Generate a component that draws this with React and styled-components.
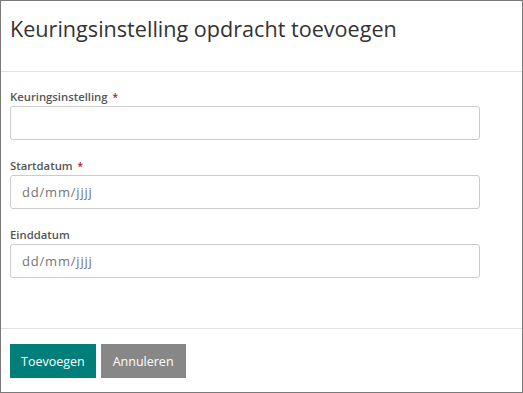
import React from "react"
import styled, { createGlobalStyle } from "styled-components"

const GlobalStyle = createGlobalStyle`
    html, body {
        margin: 0;
        padding: 0;
        background: #ffffff;
    }
    * {
        box-sizing: border-box;
    }
`

const Dialog = styled.div`
    display: flex;
    flex-direction: column;
    width: 523px;
    height: 393px;
    border: 1px solid #7a7a7a;
    background: #ffffff;
    font-family: "Open Sans", "Noto Sans", sans-serif;
    color: #333333;
`

const Header = styled.div`
    height: 71px;
    padding: 14px 9px 0;
    border-bottom: 1px solid #e2e2e2;
`

const Title = styled.h1`
    margin: 0;
    font-size: 21.6px;
    font-weight: 400;
    line-height: 28px;
    color: #333333;
`

const Body = styled.div`
    flex: 1;
    display: flex;
    flex-direction: column;
    padding: 16px 42px 0 9px;
`

const Field = styled.div`
    display: flex;
    flex-direction: column;
    margin-bottom: 17px;
`

const Label = styled.label`
    font-size: 11.3px;
    font-weight: 600;
    line-height: 18px;
    color: #555555;
`

const Required = styled.span`
    color: #b3121f;
    margin-left: 5px;
    font-size: 10px;
`

const Input = styled.input`
    height: 34px;
    padding: 0 11px;
    border: 1px solid #cccccc;
    border-radius: 3px;
    font-family: inherit;
    font-size: 13px;
    letter-spacing: 0.8px;
    color: #333333;
    outline: none;

    ::placeholder {
        color: #9a9a9a;
    }
`

const Footer = styled.div`
    display: flex;
    gap: 5px;
    height: 64px;
    padding: 15px 9px 0;
    border-top: 1px solid #e2e2e2;
`

const Button = styled.button`
    height: 34px;
    padding: 0 ${props => props.$pad}px;
    border: none;
    border-radius: 0;
    font-family: inherit;
    font-size: 12.5px;
    color: #ffffff;
    background-color: ${props => props.$primary ? "#007f7a" : "#878787"};
`

const fields = [
    { label: "Keuringsinstelling", required: true, placeholder: "" },
    { label: "Startdatum", required: true, placeholder: "dd/mm/jjjj" },
    { label: "Einddatum", required: false, placeholder: "dd/mm/jjjj" }
]

export default function App() {
    return (
        <>
            <GlobalStyle />
            <Dialog>
                <Header>
                    <Title>Keuringsinstelling opdracht toevoegen</Title>
                </Header>
                <Body>
                    {fields.map((field, index) => (
                        <Field key={index}>
                            <Label>
                                {field.label}
                                {field.required && <Required>*</Required>}
                            </Label>
                            <Input type="text" placeholder={field.placeholder} />
                        </Field>
                    ))}
                </Body>
                <Footer>
                    <Button type="button" $primary $pad={11}>Toevoegen</Button>
                    <Button type="button" $pad={12}>Annuleren</Button>
                </Footer>
            </Dialog>
        </>
    )
}
